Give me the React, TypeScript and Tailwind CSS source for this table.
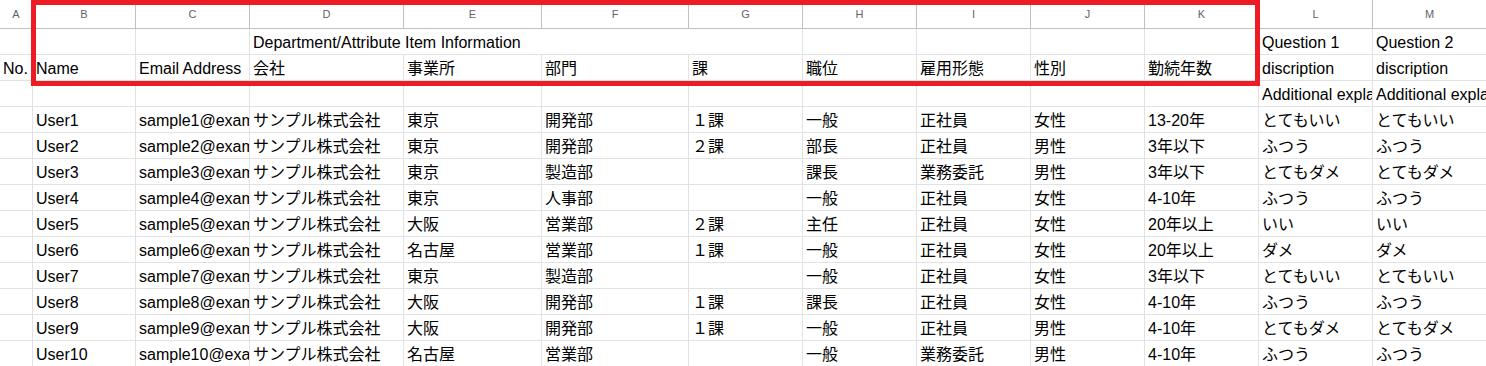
import React from 'react';

const cols = ['A', 'B', 'C', 'D', 'E', 'F', 'G', 'H', 'I', 'J', 'K', 'L', 'M'];

type Row = string[];

const users: Row[] = [
  ['', 'User1', 'sample1@example.com', 'サンプル株式会社', '東京', '開発部', '１課', '一般', '正社員', '女性', '13-20年', 'とてもいい', 'とてもいい'],
  ['', 'User2', 'sample2@example.com', 'サンプル株式会社', '東京', '開発部', '２課', '部長', '正社員', '男性', '3年以下', 'ふつう', 'ふつう'],
  ['', 'User3', 'sample3@example.com', 'サンプル株式会社', '東京', '製造部', '', '課長', '業務委託', '男性', '3年以下', 'とてもダメ', 'とてもダメ'],
  ['', 'User4', 'sample4@example.com', 'サンプル株式会社', '東京', '人事部', '', '一般', '正社員', '女性', '4-10年', 'ふつう', 'ふつう'],
  ['', 'User5', 'sample5@example.com', 'サンプル株式会社', '大阪', '営業部', '２課', '主任', '正社員', '女性', '20年以上', 'いい', 'いい'],
  ['', 'User6', 'sample6@example.com', 'サンプル株式会社', '名古屋', '営業部', '１課', '一般', '正社員', '女性', '20年以上', 'ダメ', 'ダメ'],
  ['', 'User7', 'sample7@example.com', 'サンプル株式会社', '東京', '製造部', '', '一般', '正社員', '女性', '3年以下', 'とてもいい', 'とてもいい'],
  ['', 'User8', 'sample8@example.com', 'サンプル株式会社', '大阪', '開発部', '１課', '課長', '正社員', '女性', '4-10年', 'ふつう', 'ふつう'],
  ['', 'User9', 'sample9@example.com', 'サンプル株式会社', '大阪', '開発部', '１課', '一般', '正社員', '男性', '4-10年', 'とてもダメ', 'とてもダメ'],
  ['', 'User10', 'sample10@example.com', 'サンプル株式会社', '名古屋', '営業部', '', '一般', '業務委託', '男性', '4-10年', 'ふつう', 'ふつう'],
];

const rows: Row[] = [
  ['', '', '', 'Department/Attribute Item Information', '', '', '', '', '', '', '', 'Question 1', 'Question 2'],
  ['No.', 'Name', 'Email Address', '会社', '事業所', '部門', '課', '職位', '雇用形態', '性別', '勤続年数', 'discription', 'discription'],
  ['', '', '', '', '', '', '', '', '', '', '', 'Additional explanation', 'Additional explanation'],
  ...users,
];

const Cell: React.FC<{ text: string; spill?: boolean; noRight?: boolean }> = ({ text, spill, noRight }) => (
  <div
    className={`h-[26px] min-w-0 flex items-end pl-[3px] pb-[2px] whitespace-nowrap border-b border-[#e2e2e3] ${
      noRight ? '' : 'border-r'
    } ${spill ? 'overflow-visible' : 'overflow-hidden'}`}
  >
    <span className={`leading-[18px] ${spill ? '' : 'min-w-0 overflow-hidden'}`}>{text}</span>
  </div>
);

export default function App() {
  return (
    <div className="relative w-full h-[366px] overflow-hidden bg-white text-black text-[16px] font-['Liberation_Sans','Noto_Sans_CJK_JP',sans-serif]">
      <div className="grid grid-cols-[33px_103px_114px_154px_138px_147px_114px_114px_114px_114px_114px_114px_114px]">
        {cols.map((c) => (
          <div
            key={c}
            className="h-[29px] flex items-center justify-center border-r border-b border-[#c0c0c0] text-[11px] text-[#5f6368]"
          >
            {c}
          </div>
        ))}
        {rows.map((row, r) =>
          row.map((text, c) => (
            <Cell
              key={`${r}-${c}`}
              text={text}
              spill={r === 0 && c === 3}
              noRight={r === 0 && c >= 3 && c <= 5}
            />
          ))
        )}
      </div>
      {/* red highlight around the attribute header block */}
      <div className="absolute left-[31px] top-0 w-[1229px] h-[86px] border-[5px] border-[#ed1c24]" />
    </div>
  );
}
